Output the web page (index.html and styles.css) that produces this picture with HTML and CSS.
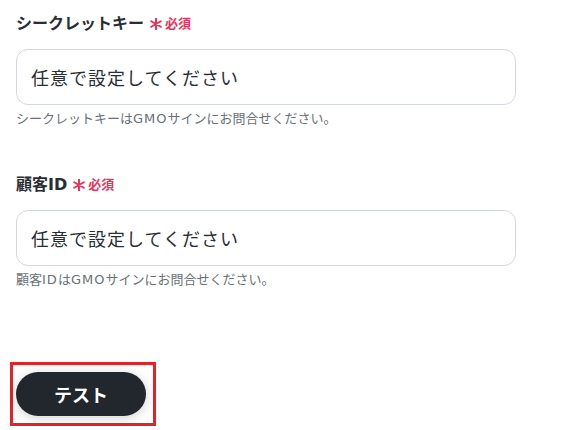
FILE: index.html
```html
<!DOCTYPE html>
<html lang="ja">
<head>
<meta charset="utf-8">
<link rel="stylesheet" href="styles.css">
</head>
<body>
<div class="form">
  <div class="field">
    <div class="label">シークレットキー <span class="req"><svg class="star" viewBox="0 0 12 12" width="12" height="12"><path d="M6 0.5V11.5M1.2 3.25L10.8 8.75M10.8 3.25L1.2 8.75" stroke="#e8335e" stroke-width="2" stroke-linecap="round"/></svg>必須</span></div>
    <div class="input">任意で設定してください</div>
    <div class="help">シークレットキーは<span class="latin">GMO</span>サインにお問合せください。</div>
  </div>
  <div class="field second">
    <div class="label">顧客ID <span class="req"><svg class="star" viewBox="0 0 12 12" width="12" height="12"><path d="M6 0.5V11.5M1.2 3.25L10.8 8.75M10.8 3.25L1.2 8.75" stroke="#e8335e" stroke-width="2" stroke-linecap="round"/></svg>必須</span></div>
    <div class="input">任意で設定してください</div>
    <div class="help">顧客<span class="latin">ID</span>は<span class="latin">GMO</span>サインにお問合せください。</div>
  </div>
  <div class="highlight">
    <button class="btn">テスト</button>
  </div>
</div>
</body>
</html>
```
FILE: styles.css
```css
html, body {
  margin: 0;
  padding: 0;
  background: #ffffff;
}
body {
  font-family: "DejaVu Sans", "Noto Sans CJK JP", sans-serif;
  color: #2a2d33;
}
.form {
  padding: 12px 66px 0 16px;
  display: flex;
  flex-direction: column;
}
.field {
  display: flex;
  flex-direction: column;
}
.second {
  margin-top: 45px;
}
.label {
  font-size: 16px;
  line-height: 24px;
  font-weight: 700;
  color: #2a2d33;
  display: flex;
  align-items: center;
}
.req {
  color: #e8335e;
  font-size: 13px;
  font-weight: 700;
  margin-left: 6px;
  display: inline-flex;
  align-items: center;
}
.star {
  margin-right: 3px;
}
.input {
  margin-top: 13px;
  height: 56px;
  box-sizing: border-box;
  border: 1px solid #d3d7de;
  border-radius: 12px;
  padding: 0 14px;
  display: flex;
  align-items: center;
  font-size: 18px;
  letter-spacing: 1px;
  color: #2a2d33;
}
.help {
  margin-top: 5px;
  font-size: 13px;
  line-height: 18px;
  color: #6b6f76;
}
.latin {
  letter-spacing: 1px;
}
.highlight {
  margin-top: 73px;
  margin-left: -6px;
  width: 146px;
  height: 64px;
  box-sizing: border-box;
  border: 3px solid #e3232a;
  padding: 7px 0 0 3px;
}
.btn {
  width: 130px;
  height: 44px;
  border: none;
  border-radius: 22px;
  background: #22272e;
  color: #ffffff;
  font-family: "Noto Sans CJK JP", sans-serif;
  font-size: 18px;
  font-weight: 700;
  box-shadow: 0 2px 12px rgba(0,0,0,0.18);
  cursor: pointer;
  padding: 0;
}
```
